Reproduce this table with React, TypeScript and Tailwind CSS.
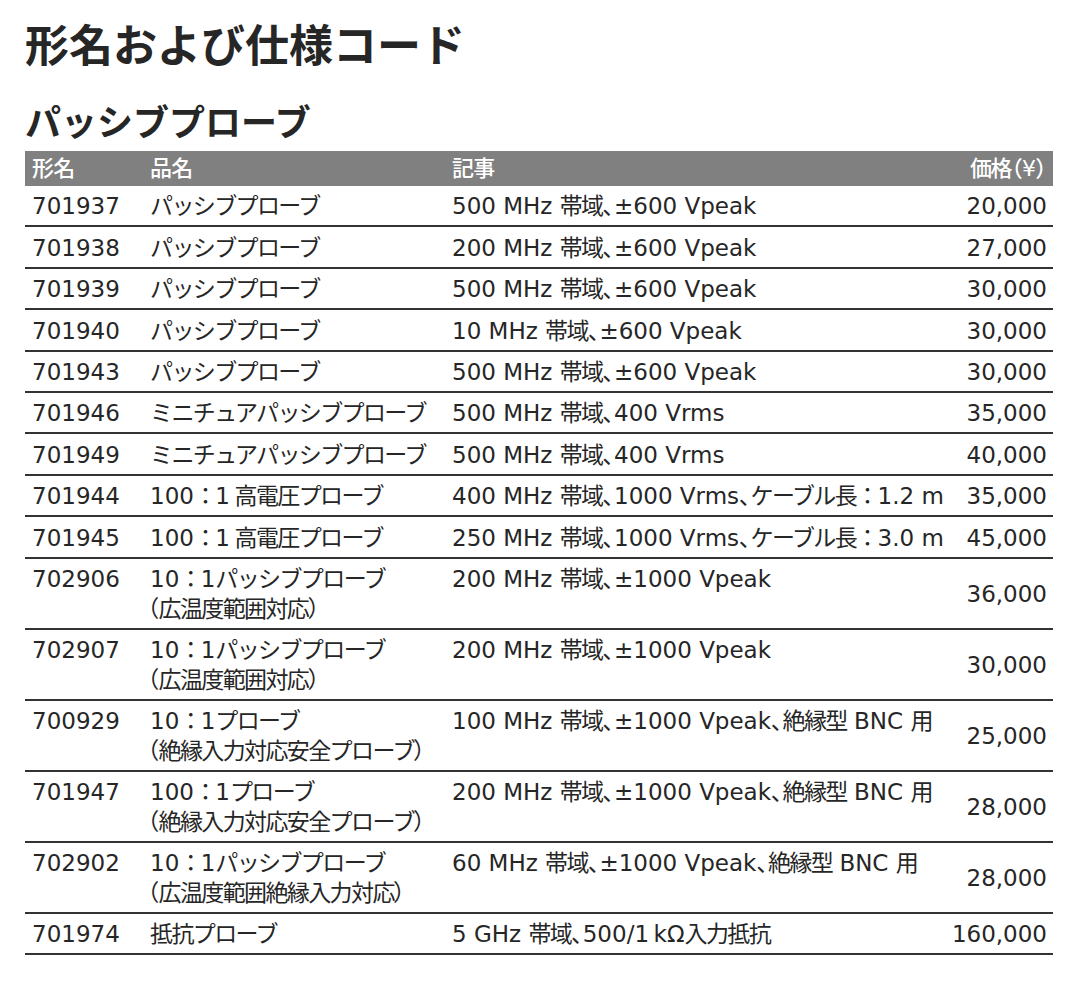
import type { ReactNode } from 'react';

const T = '\u2009';

const rows: { code: string; name: string[]; note: string; price: string }[] = [
  { code: '701937', name: ['パッシブプローブ'], note: '500 MHz 帯域、±600 Vpeak', price: '20,000' },
  { code: '701938', name: ['パッシブプローブ'], note: '200 MHz 帯域、±600 Vpeak', price: '27,000' },
  { code: '701939', name: ['パッシブプローブ'], note: '500 MHz 帯域、±600 Vpeak', price: '30,000' },
  { code: '701940', name: ['パッシブプローブ'], note: '10 MHz 帯域、±600 Vpeak', price: '30,000' },
  { code: '701943', name: ['パッシブプローブ'], note: '500 MHz 帯域、±600 Vpeak', price: '30,000' },
  { code: '701946', name: ['ミニチュアパッシブプローブ'], note: '500 MHz 帯域、400 Vrms', price: '35,000' },
  { code: '701949', name: ['ミニチュアパッシブプローブ'], note: '500 MHz 帯域、400 Vrms', price: '40,000' },
  { code: '701944', name: [`100：1${T}高電圧プローブ`], note: '400 MHz 帯域、1000 Vrms、ケーブル長：1.2 m', price: '35,000' },
  { code: '701945', name: [`100：1${T}高電圧プローブ`], note: '250 MHz 帯域、1000 Vrms、ケーブル長：3.0 m', price: '45,000' },
  { code: '702906', name: ['10：1パッシブプローブ', '（広温度範囲対応）'], note: '200 MHz 帯域、±1000 Vpeak', price: '36,000' },
  { code: '702907', name: ['10：1パッシブプローブ', '（広温度範囲対応）'], note: '200 MHz 帯域、±1000 Vpeak', price: '30,000' },
  { code: '700929', name: ['10：1プローブ', '（絶縁入力対応安全プローブ）'], note: '100 MHz 帯域、±1000 Vpeak、絶縁型 BNC 用', price: '25,000' },
  { code: '701947', name: ['100：1プローブ', '（絶縁入力対応安全プローブ）'], note: '200 MHz 帯域、±1000 Vpeak、絶縁型 BNC 用', price: '28,000' },
  { code: '702902', name: ['10：1パッシブプローブ', '（広温度範囲絶縁入力対応）'], note: '60 MHz 帯域、±1000 Vpeak、絶縁型 BNC 用', price: '28,000' },
  { code: '701974', name: ['抵抗プローブ'], note: `5 GHz 帯域、500/1${T}kΩ入力抵抗`, price: '160,000' },
];

// japanese runs are set a little tight, 、 and brackets get proportional widths
function Jp({ s }: { s: string }) {
  const parts = s.split(/([、（）]|[\u3040-\u30ff\u4e00-\u9fff：]+)/).filter(Boolean);
  const out: ReactNode[] = parts.map((p, i) => {
    if (/^[、（）]$/.test(p)) {
      return (
        <span key={i} className="[font-feature-settings:'palt']">
          {p}
        </span>
      );
    }
    if (/^[\u3040-\u30ff\u4e00-\u9fff：]+$/.test(p)) {
      return (
        <span key={i} className="tracking-[-0.07em]">
          {p}
        </span>
      );
    }
    return <span key={i}>{p}</span>;
  });
  return <>{out}</>;
}

const font = { fontFamily: '"DejaVu Sans", "Noto Sans CJK JP", sans-serif' };
const jpFont = { fontFamily: '"Noto Sans CJK JP", sans-serif' };

export default function App() {
  return (
    <div className="min-h-[981px] w-[1083px] bg-white text-[#262626]" style={font}>
      <div className="pl-[25px] pr-[30px] pt-[16px]">
        <h1 className="text-[44px] font-bold leading-[54px]" style={jpFont}>
          形名および仕様コード
        </h1>
        <h2 className="mt-[28px] text-[36px] font-bold leading-[44px]" style={jpFont}>
          パッシブプローブ
        </h2>

        <div className="mt-[9px]">
          <div className="grid h-[35px] grid-cols-[118px_302px_1fr_auto] items-center bg-[#808080] pl-[7px] pr-[6px] text-[22px] font-medium leading-[30px] text-white">
            <span className="tracking-[-0.03em]">形名</span>
            <span className="tracking-[-0.03em]">品名</span>
            <span className="tracking-[-0.03em]">記事</span>
            <span>
              <Jp s="価格（¥）" />
            </span>
          </div>

          {rows.map(r => (
            <div
              key={r.code}
              className={`grid grid-cols-[118px_302px_1fr_auto] border-b-2 border-[#333] pb-[4px] pl-[7px] pr-[6px] text-[23px] leading-[30px] ${
                r.name.length > 1 ? 'pt-[5px]' : 'pt-[5.4px]'
              }`}
            >
              <span>{r.code}</span>
              <span className="flex flex-col whitespace-nowrap">
                {r.name.map(n => (
                  <span key={n} className={n.startsWith('（') ? '-ml-[3px]' : ''}>
                    <Jp s={n} />
                  </span>
                ))}
              </span>
              <span className="whitespace-nowrap">
                <Jp s={r.note} />
              </span>
              <span className="self-center text-right">{r.price}</span>
            </div>
          ))}
        </div>
      </div>
    </div>
  );
}
